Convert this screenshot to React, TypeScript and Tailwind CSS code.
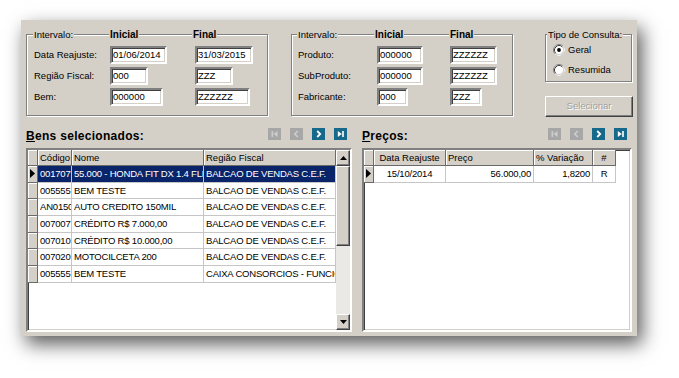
import React from "react";

const sunken =
  "border-2 border-t-[#808080] border-l-[#808080] border-r-white border-b-white shadow-[inset_1px_1px_0_#404040,inset_-1px_-1px_0_#d4d0c8]";
const raised =
  "border border-t-white border-l-white border-r-[#404040] border-b-[#404040] shadow-[inset_-1px_-1px_0_#808080]";
const etched =
  "border border-[#808080] shadow-[1px_1px_0_#fff,inset_1px_1px_0_#fff]";

function Field({ w, children }: { w: string; children: React.ReactNode }) {
  return (
    <div
      className={`${w} h-[18px] bg-white ${sunken} pl-[1px] text-[9.5px] leading-[14px] whitespace-nowrap overflow-hidden`}
    >
      {children}
    </div>
  );
}

function Radio({ checked }: { checked?: boolean }) {
  return (
    <svg width="12" height="12" viewBox="0 0 12 12" className="shrink-0">
      <circle cx="6" cy="6" r="5.5" fill="#fff" stroke="#808080" strokeWidth="1" />
      <path d="M9.89 2.11 A5.5 5.5 0 0 1 2.11 9.89" fill="none" stroke="#fff" strokeWidth="1" />
      <path d="M2.82 9.18 A4.5 4.5 0 0 1 9.18 2.82" fill="none" stroke="#404040" strokeWidth="1" />
      <path d="M9.18 2.82 A4.5 4.5 0 0 1 2.82 9.18" fill="none" stroke="#d4d0c8" strokeWidth="1" />
      {checked && <circle cx="6" cy="6" r="1.9" fill="#000" />}
    </svg>
  );
}

function NavBtn({ kind, enabled }: { kind: "first" | "prev" | "next" | "last"; enabled?: boolean }) {
  const bg = enabled ? "bg-[#17698c]" : "bg-[#a7a7a7]";
  const c = enabled ? "#ffffff" : "#cdcdcd";
  return (
    <div className={`w-[13px] h-[12px] ${bg} flex items-center justify-center`}>
      <svg width="13" height="12" viewBox="0 0 13 12">
        {kind === "first" && (
          <>
            <rect x="3.5" y="3" width="1.6" height="6" fill={c} />
            <polygon points="9.5,3 9.5,9 5.5,6" fill={c} />
          </>
        )}
        {kind === "prev" && (
          <polyline points="7.8,3 4.8,6 7.8,9" fill="none" stroke={c} strokeWidth="1.6" />
        )}
        {kind === "next" && (
          <polyline points="5.2,3 8.2,6 5.2,9" fill="none" stroke={c} strokeWidth="1.8" />
        )}
        {kind === "last" && (
          <>
            <polygon points="3.8,3 3.8,9 7.8,6" fill={c} />
            <rect x="8.2" y="3" width="1.6" height="6" fill={c} />
          </>
        )}
      </svg>
    </div>
  );
}

function Nav() {
  return (
    <div className="flex gap-[9px] pr-[5px] pt-[2px]">
      <NavBtn kind="first" />
      <NavBtn kind="prev" />
      <NavBtn kind="next" enabled />
      <NavBtn kind="last" enabled />
    </div>
  );
}

function Pointer() {
  return (
    <svg width="5" height="9" viewBox="0 0 5 9">
      <polygon points="0,0 5,4.5 0,9" fill="#000" />
    </svg>
  );
}

const headCell =
  "h-[16px] bg-[#d4d0c8] border-r border-b border-[#6a6a6a] shadow-[inset_1px_1px_0_#fff] px-[2px] text-[9.5px] leading-[15px] whitespace-nowrap overflow-hidden shrink-0";
const indCell =
  "w-[10px] shrink-0 bg-[#d4d0c8] border-r border-b border-r-[#6a6a6a] border-b-[#6a6a6a] shadow-[inset_1px_1px_0_#fff] flex items-center justify-center";
const dataCell =
  "border-r border-b border-[#c6c6c6] px-[2px] text-[9.5px] leading-[15.5px] whitespace-nowrap overflow-hidden shrink-0 tracking-[-0.2px]";

const bens = [
  ["001707", "55.000 - HONDA  FIT DX 1.4 FLEX", "BALCAO DE VENDAS C.E.F."],
  ["005555", "BEM TESTE", "BALCAO DE VENDAS C.E.F."],
  ["AN0150C", "AUTO CREDITO 150MIL", "BALCAO DE VENDAS C.E.F."],
  ["007007", "CRÉDITO R$ 7.000,00", "BALCAO DE VENDAS C.E.F."],
  ["007010", "CRÉDITO R$ 10.000,00", "BALCAO DE VENDAS C.E.F."],
  ["007020", "MOTOCILCETA 200", "BALCAO DE VENDAS C.E.F."],
  ["005555", "BEM TESTE", "CAIXA CONSORCIOS - FUNCIONARIOS"],
];

function ScrollBar() {
  return (
    <div className="w-[14px] shrink-0 flex flex-col bg-[#ebe9e5]">
      <div className={`h-[16px] bg-[#d4d0c8] ${raised} flex items-center justify-center`}>
        <svg width="7" height="4" viewBox="0 0 7 4">
          <polygon points="0,4 7,4 3.5,0" fill="#000" />
        </svg>
      </div>
      <div className={`h-[80px] bg-[#d4d0c8] ${raised}`} />
      <div className="flex-1" />
      <div className={`h-[16px] bg-[#d4d0c8] ${raised} flex items-center justify-center`}>
        <svg width="7" height="4" viewBox="0 0 7 4">
          <polygon points="0,0 7,0 3.5,4" fill="#000" />
        </svg>
      </div>
    </div>
  );
}

function BensGrid() {
  return (
    <div className={`${sunken} w-[326px] h-[184px] bg-white flex overflow-hidden`}>
      <div className="w-[308px] flex flex-col">
        <div className="flex">
          <div className={`${headCell} w-[10px] px-0`} />
          <div className={`${headCell} w-[34px]`}>Código</div>
          <div className={`${headCell} w-[132px]`}>Nome</div>
          <div className={`${headCell} w-[132px]`}>Região Fiscal</div>
        </div>
        {bens.map((r, i) => {
          const sel = i === 0;
          const cls = sel ? "bg-[#0a246a] text-white" : "text-black";
          return (
            <div key={i} className="flex h-[16.67px]">
              <div className={indCell}>{sel && <Pointer />}</div>
              <div className={`${dataCell} ${cls} w-[34px]`}>{r[0]}</div>
              <div className={`${dataCell} ${cls} w-[132px]`}>{r[1]}</div>
              <div className={`${dataCell} ${cls} w-[132px]`}>{r[2]}</div>
            </div>
          );
        })}
      </div>
      <ScrollBar />
    </div>
  );
}

function PrecosGrid() {
  return (
    <div className={`${sunken} w-[270px] h-[184px] bg-white flex flex-col overflow-hidden`}>
      <div className="flex">
        <div className={`${headCell} w-[10px] px-0`} />
        <div className={`${headCell} w-[72px] text-center`}>Data Reajuste</div>
        <div className={`${headCell} w-[88px]`}>Preço</div>
        <div className={`${headCell} w-[59px]`}>% Variação</div>
        <div className={`${headCell} w-[23px] text-center`}>#</div>
      </div>
      <div className="flex h-[16.67px]">
        <div className={indCell}>
          <Pointer />
        </div>
        <div className={`${dataCell} w-[72px] text-center`}>15/10/2014</div>
        <div className={`${dataCell} w-[88px] text-right`}>56.000,00</div>
        <div className={`${dataCell} w-[59px] text-right`}>1,8200</div>
        <div className={`${dataCell} w-[23px] text-center`}>R</div>
      </div>
    </div>
  );
}

function Legend({ pos, bold, children }: { pos: string; bold?: boolean; children: React.ReactNode }) {
  return (
    <span
      className={`absolute top-[-7px] ${pos} bg-[#d4d0c8] px-[1px] leading-[13px] whitespace-nowrap ${
        bold ? "text-[10px] font-bold" : "text-[9.5px]"
      }`}
    >
      {children}
    </span>
  );
}

export default function App() {
  return (
    <div className="w-[679px] h-[378px] bg-white overflow-hidden pt-[20px] pl-[21px] font-['Liberation_Sans',Arial,sans-serif] text-black">
      <div className="w-[616px] h-[316px] bg-[#d4d0c8] px-[5px] pt-[14px] shadow-[5px_8px_18px_rgba(0,0,0,0.65)]">
        {/* Top filters */}
        <div className="flex items-start">
          <div className={`relative w-[242px] h-[82px] ${etched} pt-[11px] pl-[7px]`}>
            <Legend pos="left-[6px]">Intervalo:</Legend>
            <Legend pos="left-[82px]" bold>
              Inicial
            </Legend>
            <Legend pos="left-[165px]" bold>
              Final
            </Legend>
            <div className="grid grid-cols-[76px_85px_auto] gap-y-[3px] items-center text-[9.5px]">
              <span>Data Reajuste:</span>
              <Field w="w-[57px]">01/06/2014</Field>
              <Field w="w-[58px]">31/03/2015</Field>
              <span>Região Fiscal:</span>
              <Field w="w-[38px]">000</Field>
              <Field w="w-[38px]">ZZZ</Field>
              <span>Bem:</span>
              <Field w="w-[53px]">000000</Field>
              <Field w="w-[55px]">ZZZZZZ</Field>
            </div>
          </div>

          <div className={`relative ml-[23px] w-[222px] h-[82px] ${etched} pt-[11px] pl-[6px]`}>
            <Legend pos="left-[5px]">Intervalo:</Legend>
            <Legend pos="left-[82px]" bold>
              Inicial
            </Legend>
            <Legend pos="left-[157px]" bold>
              Final
            </Legend>
            <div className="grid grid-cols-[79px_73px_auto] gap-y-[3px] items-center text-[9.5px]">
              <span>Produto:</span>
              <Field w="w-[46px]">000000</Field>
              <Field w="w-[47px]">ZZZZZZ</Field>
              <span>SubProduto:</span>
              <Field w="w-[46px]">000000</Field>
              <Field w="w-[47px]">ZZZZZZ</Field>
              <span>Fabricante:</span>
              <Field w="w-[31px]">000</Field>
              <Field w="w-[32px]">ZZZ</Field>
            </div>
          </div>

          <div className="ml-[32px] w-[87px] flex flex-col">
            <div className={`relative h-[48px] ${etched} pt-[9px] pl-[7px] flex flex-col gap-[8px] text-[9.5px]`}>
              <Legend pos="left-[1px]">Tipo de Consulta:</Legend>
              <div className="flex items-center gap-[3px] h-[12px]">
                <Radio checked />
                <span>Geral</span>
              </div>
              <div className="flex items-center gap-[3px] h-[12px]">
                <Radio />
                <span>Resumida</span>
              </div>
            </div>
            <div
              className={`mt-[14px] h-[21px] w-[88px] bg-[#d4d0c8] ${raised} flex items-center justify-center text-[9.5px] text-[#a0a0a0] [text-shadow:1px_1px_0_#fff]`}
            >
              Selecionar
            </div>
          </div>
        </div>

        {/* Grids */}
        <div className="flex mt-[9px] gap-[10px]">
          <div className="w-[326px] flex flex-col">
            <div className="h-[22px] flex justify-between items-start">
              <span className="text-[12px] font-bold tracking-[0.3px] leading-[20px]">
                <span className="underline">B</span>ens selecionados:
              </span>
              <Nav />
            </div>
            <BensGrid />
          </div>
          <div className="w-[270px] flex flex-col">
            <div className="h-[22px] flex justify-between items-start">
              <span className="text-[12px] font-bold tracking-[0.3px] leading-[20px]">
                <span className="underline">P</span>reços:
              </span>
              <Nav />
            </div>
            <PrecosGrid />
          </div>
        </div>
      </div>
    </div>
  );
}
